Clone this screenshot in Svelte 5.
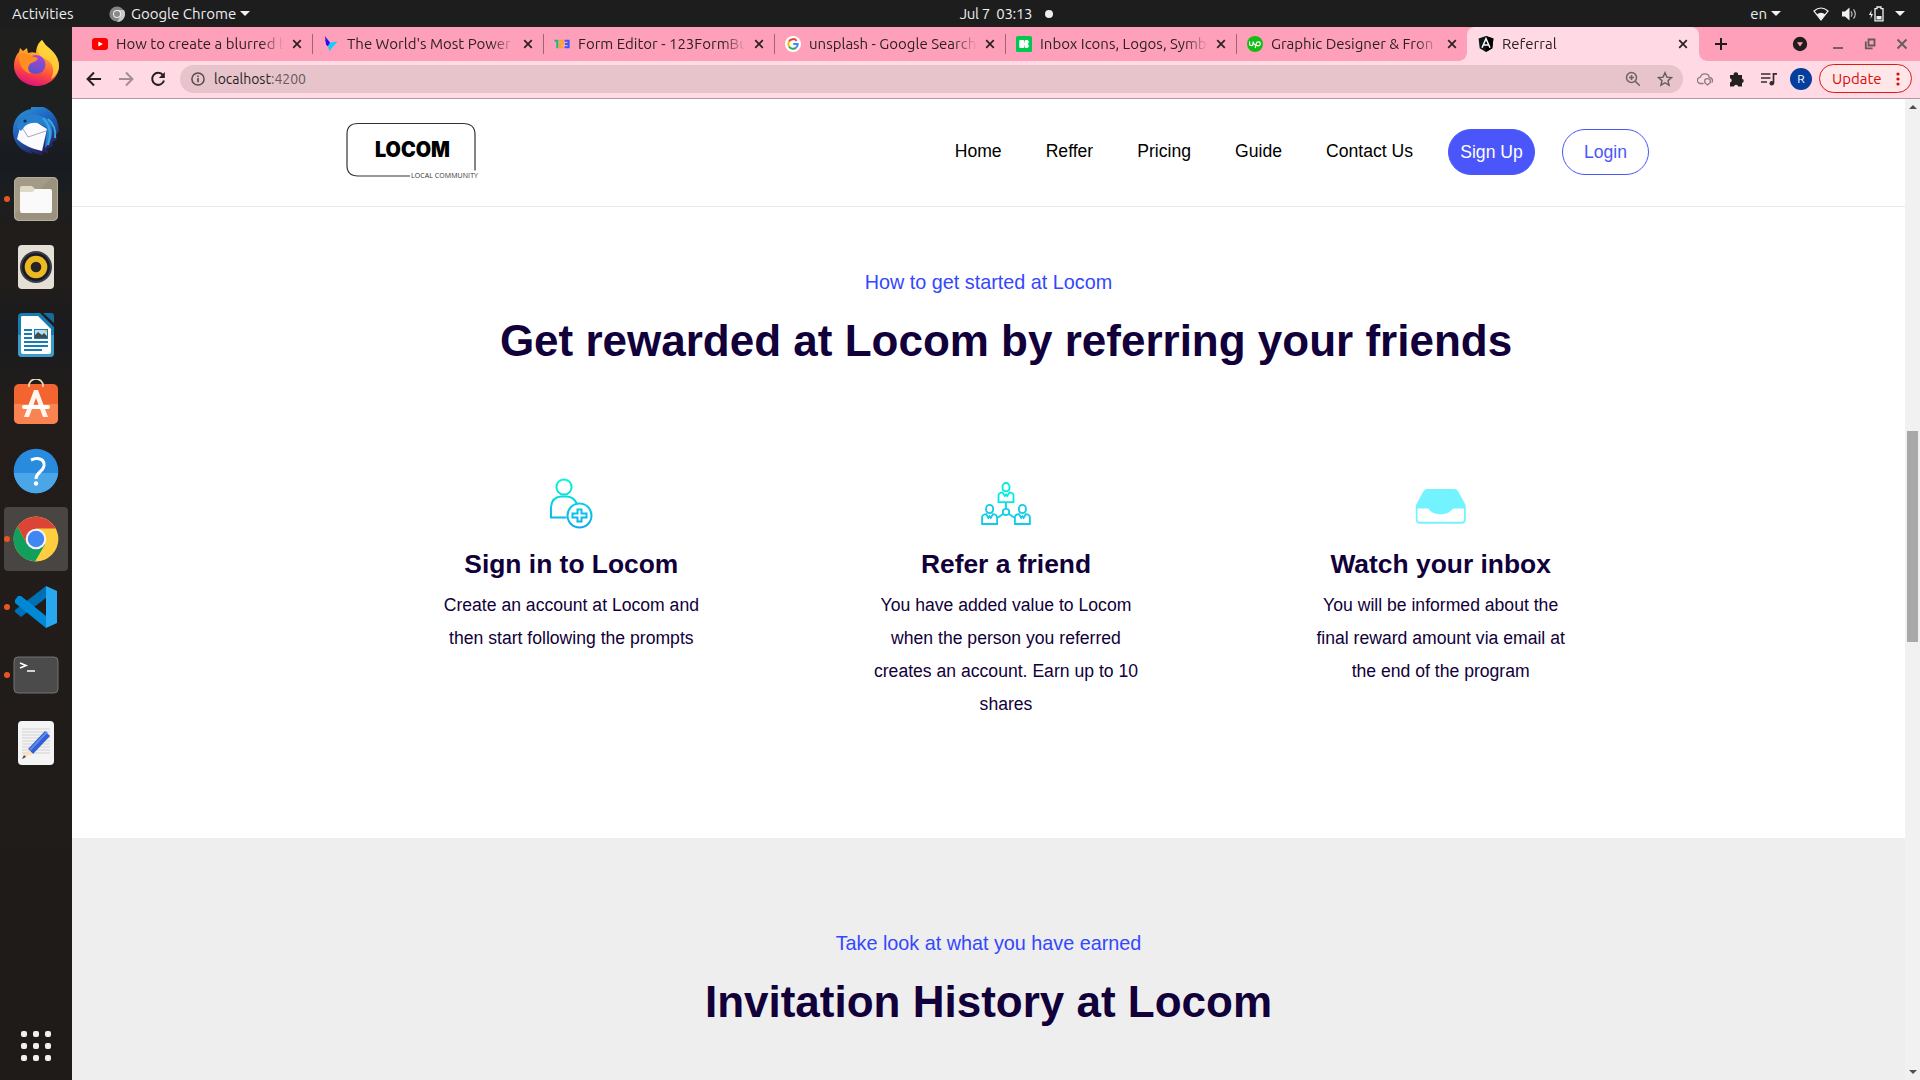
<script>
  const tabs = [
    { icon: 'youtube', title: 'How to create a blurred b' },
    { icon: 'bolt', title: "The World's Most Power" },
    { icon: 'form', title: 'Form Editor - 123FormBu' },
    { icon: 'google', title: 'unsplash - Google Search' },
    { icon: 'icons8', title: 'Inbox Icons, Logos, Symb' },
    { icon: 'upwork', title: 'Graphic Designer & Fron' },
    { icon: 'angular', title: 'Referral', active: true }
  ];
  const dock = [
    { icon: 'firefox' },
    { icon: 'thunderbird' },
    { icon: 'files', running: true },
    { icon: 'music' },
    { icon: 'writer' },
    { icon: 'software' },
    { icon: 'help' },
    { icon: 'chrome', running: true, active: true },
    { icon: 'vscode', running: true },
    { icon: 'terminal', running: true },
    { icon: 'editor' }
  ];
  const nav = ['Home', 'Reffer', 'Pricing', 'Guide', 'Contact Us'];
  const steps = [
    { icon: 'signin', title: 'Sign in to Locom', text: 'Create an account at Locom and then start following the prompts' },
    { icon: 'refer', title: 'Refer a friend', text: 'You have added value to Locom when the person you referred creates an account. Earn up to 10 shares' },
    { icon: 'inbox', title: 'Watch your inbox', text: 'You will be informed about the final reward amount via email at the end of the program' }
  ];
</script>

{#snippet favicon(name)}
  <svg class="favicon" viewBox="0 0 16 16" width="16" height="16">
    {#if name === 'youtube'}
      <rect x="0" y="2" width="16" height="12" rx="3" fill="#f00" />
      <path d="M6.4 5.4v5.2L10.9 8z" fill="#fff" />
    {:else if name === 'bolt'}
      <path d="M2 .3l5 6.200L4.600 9.700 3 8.800z" fill="#3a00ff" />
      <path d="M4.600 7L14.400 5.600 6.200 15.300z" fill="#12cdff" />
      <path d="M2.200 4l4.800 2.500-2.300 4z" fill="#2a10e0" />
    {:else if name === 'form'}
      <path d="M.5 4.800h2.800v7.400" fill="none" stroke="#12b886" stroke-width="2" />
      <path d="M5.200 4.800h3.600v3H6v3.400h3.600" fill="none" stroke="#ffa51c" stroke-width="2" />
      <path d="M10.600 4.800h4v6.500h-4M11 8h3.500" fill="none" stroke="#2d5bff" stroke-width="2" />
    {:else if name === 'google'}
      <circle cx="8" cy="8" r="8" fill="#fff" />
      <path d="M11.700 4.800A4.700 4.700 0 0 0 4 5.500" fill="none" stroke="#ea4335" stroke-width="2" />
      <path d="M4 5.500a4.800 4.800 0 0 0 0 5" fill="none" stroke="#fbbc05" stroke-width="2" />
      <path d="M4 10.500a4.700 4.700 0 0 0 7.200 1" fill="none" stroke="#34a853" stroke-width="2" />
      <path d="M11.200 11.500A4.800 4.800 0 0 0 12.700 8H8.200" fill="none" stroke="#4285f4" stroke-width="2" />
    {:else if name === 'icons8'}
      <rect width="16" height="16" rx="1.5" fill="#00c853" />
      <path d="M4.200 4h3q.9 0 .9.900v6.200q0 .900-.9.900h-3q-.9 0-.9-.900V4.900q0-.9.900-.9zM9.400 4h2q1.400.3 1.400 2 0 1.500-1 2 1 .5 1 2 0 1.700-1.400 2h-2q-1-.3-1-2 0-1.500.2-2-.2-.5-.2-2 0-1.700 1-2z" fill="#fff" />
      <path d="M7 8h3" stroke="#fff" stroke-width="1.800" />
    {:else if name === 'upwork'}
      <circle cx="8" cy="8" r="8" fill="#14bd14" />
      <path d="M2.600 5.600v2.300a1.700 1.700 0 0 0 3.400 0V5.600c.6 1.600 1.400 2.900 2.600 3.800M8.200 12L9.300 7.600a2 2 0 1 1 1.900 2.300c-1 0-1.800-.5-2.500-1.200" fill="none" stroke="#fff" stroke-width="1.200" />
    {:else}
      <path d="M8 0l7.400 2.600-1.100 9.700L8 16l-6.300-3.700L.6 2.600z" fill="#10161c" />
      <path d="M8 0v16l6.300-3.700 1.100-9.700z" fill="#000" />
      <path d="M4 11.800L8 2.700l4 9.100M5.600 9.100h4.800" fill="none" stroke="#fff" stroke-width="1.500" />
    {/if}
  </svg>
{/snippet}

{#snippet dockIcon(name)}
  <svg viewBox="0 0 48 48" width="48" height="48">
    {#if name === 'firefox'}
      <path d="M30 1c2 3 4 6 7 8 6 5 10 11 10 18 0 11-10 20-22 20S2 38 2 27c0-6 2-11 5-14l1-4 3 3 4-3 1 5c3-1 6-1 8 0 0-5 2-10 6-13z" fill="url(#fox)" />
      <path d="M30 1c2 3 4 6 7 8 6 5 10 11 10 18 0 6-4 11-8 13 3-6 3-12-1-17-4-4-10-4-12-10 0-5 1-9 4-12z" fill="#ffd73b" opacity=".82" />
      <circle cx="24" cy="25.500" r="9.500" fill="url(#orb)" />
      <path d="M7 17c4-3 9-2 12 0l7 2c-1 4-6 4-8 6-3 3-2 7 1 10-8-2-12-9-12-18z" fill="#ff8e20" />
    {:else if name === 'thunderbird'}
      <path d="M19 2C7 4 0 14 1 26c1 11 9 19 20 21l-3-4c3 3 8 5 13 5l-1-3 6 1-1-4 6-3-1-3 5-4-1-4 3-4-1-6c-1-9-9-18-19-19-4 0-8 1-8-1z" fill="url(#bird)" />
      <path d="M9 17l15-2 11 7-5 22c-10-2-20-7-25-12z" fill="#fbfbff" />
      <path d="M8 17l8 13 18-6" fill="none" stroke="#aaa9b3" stroke-width="1" />
      <path d="M5 20c2-9 9-12 18-13l13 5c7 9 5 22-3 29l2-20c-7-6-15-7-22-2l-4 5z" fill="#2780cf" />
      <path d="M36 12c6 5 8 12 7 19M31 11c8 8 8 18 5 27" stroke="#3aa7df" fill="none" stroke-width="2" />
      <circle cx="13" cy="14" r="1.600" fill="#172846" />
    {:else if name === 'files'}
      <rect x="2" y="2" width="44" height="44" rx="5" fill="#a39b86" /><path d="M40 2h1a5 5 0 0 1 5 5v34a5 5 0 0 1-5 5H7a5 5 0 0 1-5-5v-1z" fill="#9a927e" />
      <path d="M8 20v-7q0-2 2-2h10l4 4h12v5z" fill="#dedac8" />
      <path d="M8 17h12q2 0 3-3h15q2 0 2 2v20q0 2-2 2H10q-2 0-2-2z" fill="#fafafa" />
      <rect x="2.500" y="2.500" width="43" height="43" rx="5" fill="none" stroke="#b6ae9a" />
    {:else if name === 'music'}
      <rect x="6" y="2" width="36" height="44" rx="4" fill="#e4e0d5" />
      <circle cx="24" cy="24" r="16" fill="#3a3e48" /><circle cx="24" cy="24" r="14" fill="#1a1c25" />
      <circle cx="24" cy="24" r="11.300" fill="#ecba20" /><circle cx="24" cy="24" r="5.300" fill="#252525" />
    {:else if name === 'writer'}
      <path d="M10 2h18l14 14v26q0 4-4 4H10q-4 0-4-4V6q0-4 4-4z" fill="#177cb1" />
      <path d="M6 24h36v18q0 4-4 4H10q-4 0-4-4z" fill="#3e9ccc" />
      <path d="M10 5h16l13 13v23q0 2-2 2H11q-2 0-2-2V6z" fill="#fff" />
      <path d="M31 2h8q3 0 3 3v7z" fill="#176b99" />
      <path d="M12 19h8M12 23h8M12 27h8M12 31h24M12 35h24M12 39h18" stroke="#177cb1" stroke-width="2" />
      <rect x="22" y="18" width="14" height="10" fill="#177cb1" /><path d="M23 19h12v8H23z" fill="#b6dff5" /><path d="M23 27v-3l3-3 4 3 2-2 3 3v2z" fill="#424b51" /><path d="M32 19h3v3z" fill="#f5c21d" />
    {:else if name === 'software'}
      <rect x="2" y="5" width="44" height="40" rx="5" fill="#f26530" /><path d="M2 25h44v15a5 5 0 0 1-5 5H7a5 5 0 0 1-5-5z" fill="#f98351" />
      <path d="M17 8V6.500a7 6.500 0 0 1 14 0V8" fill="none" stroke="#f5dab6" stroke-width="1.700" />
      <path d="M22 11h4l10 27h-5l-7-19-7 19h-5z" fill="#fff4ee" /><rect x="10" y="26" width="28" height="4" rx="2" fill="#fff" />
    {:else if name === 'help'}
      <circle cx="24" cy="24" r="22.300" fill="#298bdd" /><path d="M1.800 26h44.400a22.300 22.300 0 0 1-44.400 0z" fill="#4aa6e7" />
      <path d="M19 13c7-3 14-1 13 6-1 6-8 6-8 13" fill="none" stroke="#fff" stroke-width="3" /><circle cx="24" cy="36.500" r="2.200" fill="#fff" />
    {:else if name === 'chrome'}
      <circle cx="24" cy="24" r="22.400" fill="#ffcd40" />
      <path d="M24 24L5.500 11.500A22.400 22.400 0 0 1 43.600 13.500H24z" fill="#dc4437" />
      <path d="M5.500 11.500A22.400 22.400 0 0 0 23 46.400l10-17L24 24l-9 5z" fill="#10a05c" />
      <path d="M5.500 11.500L15 29l9-15z" fill="#dc4437" />
      <circle cx="24" cy="24" r="10.300" fill="#f4f4f4" /><circle cx="24" cy="24" r="8.200" fill="#4285f4" />
    {:else if name === 'vscode'}
      <path d="M34 3v12L9 34l-6-5v-2z" fill="#0070b4" />
      <path d="M9 13l25 20v12L3 20v-3l3-4z" fill="#0089d6" />
      <path d="M34 3l11 5v32l-11 5z" fill="#28a8f1" />
    {:else if name === 'terminal'}
      <rect x="2" y="6" width="44" height="36" rx="4" fill="#4b4b4b" stroke="#747474" />
      <path d="M8 12l6 2.500L8 17M15 20h8" stroke="#fff" fill="none" stroke-width="1.600" />
    {:else}
      <rect x="6" y="2" width="36" height="44" rx="4" fill="#f4f4f4" />
      <path d="M10 10h28M10 13h28M10 16h28M10 19h28M10 22h28M10 25h28M10 28h28M10 31h28M10 34h28" stroke="#d1d1d1" />
      <path d="M16 30L33 12l5 5-17 18z" fill="#3060d6" /><path d="M18 31L35 13" stroke="#6189ea" stroke-width="2" /><path d="M16 30l5 5-10 4z" fill="#ffe0bc" /><path d="M12 36l2 2-4 2z" fill="#444" />
    {/if}
  </svg>
{/snippet}

{#snippet person(x, y, color)}
  <g transform={`translate(${x} ${y})`} stroke={color}>
    <rect x="-3.500" y="0" width="7" height="8.400" rx="3.500" />
    <path d="M-7.500 19.200v-6.800q0-2.400 4-3.100L-1.200 13l1.200-1.600L1.200 13l2.300-3.700q4 .7 4 3.100v6.800z" />
  </g>
{/snippet}

{#snippet stepIcon(name)}
  <svg class="step-icon" viewBox="0 0 60 60" width="60" height="60">
    {#if name === 'signin'}
      <g fill="none" stroke="url(#cyan)" stroke-width="2">
        <circle cx="23" cy="12" r="7.600" />
        <path d="M25.600 42.500H10V32q1-10 10-10.500h6q7 .5 10 7.300" />
        <circle cx="38.500" cy="40.500" r="12" />
        <path d="M36.500 34.500h4v4h5v4h-5v4h-4v-4h-5v-4h5z" />
      </g>
    {:else if name === 'refer'}
      <g fill="none" stroke="#0cd2e8" stroke-width="1.800">
        {@render person(30, 8, '#00ecde')}
        {@render person(13.6, 29.8, '#10cbea')}
        {@render person(46.4, 29.8, '#10cbea')}
        <circle cx="30" cy="37" r="3.200" />
        <path d="M30 27.500v6.200M27 39l-5 3.400M33 39l5 3.400" />
      </g>
    {:else}
      <path d="M16.300 14h27q2.600 0 4 2.400l6.500 12.200q1 1.800 1 3.600v12q0 4.500-4.500 4.500h-41q-4.500 0-4.500-4.500v-12q0-1.800 1-3.600l6.500-12.200q1.400-2.400 4-2.400z" fill="#73f3ff" />
      <path d="M6.500 33.500h9.800q1 0 2 1.300 4 4.600 11.300 4.600t11.300-4.600q1-1.300 2-1.300h10v10.800q0 2.500-2.500 2.500H9q-2.500 0-2.500-2.500z" fill="#fff" />
    {/if}
  </svg>
{/snippet}

<svg class="defs" width="0" height="0">
  <defs>
    <linearGradient id="fox" x1=".7" y1="0" x2=".4" y2="1"><stop offset="0" stop-color="#fff044" /><stop offset=".35" stop-color="#ffa425" /><stop offset=".7" stop-color="#ff4b3e" /><stop offset="1" stop-color="#e0127c" /></linearGradient>
    <linearGradient id="orb" x1=".6" y1="0" x2=".3" y2="1"><stop offset="0" stop-color="#a645dc" /><stop offset="1" stop-color="#5653c4" /></linearGradient>
    <linearGradient id="bird" x1="0" y1="0" x2=".5" y2="1"><stop offset="0" stop-color="#339ed5" /><stop offset=".5" stop-color="#1d62c0" /><stop offset="1" stop-color="#26235e" /></linearGradient>
    <linearGradient id="cyan" gradientUnits="userSpaceOnUse" x1="0" y1="4" x2="0" y2="53"><stop offset="0" stop-color="#00f8d8" /><stop offset="1" stop-color="#0baaf2" /></linearGradient>
  </defs>
</svg>

<div class="desktop">
  <div class="topbar">
    <div class="side left">
      <span class="activities">Activities</span>
      <svg width="16" height="16" viewBox="0 0 16 16"><circle cx="8" cy="8" r="7.600" fill="#858585" /><path d="M8 4h7a8 8 0 0 1-7 12l3-5z" fill="#c9c9c9" /><circle cx="8" cy="8" r="4" fill="#eee" /><circle cx="8" cy="8" r="3" fill="#888" /></svg>
      <span class="appname">Google Chrome</span>
      <i class="caret"></i>
    </div>
    <div class="clock"><span>Jul 7&nbsp; 03:13</span><i></i></div>
    <div class="side right">
      <span class="lang">en</span><i class="caret"></i>
      <svg class="wifi" width="16" height="16" viewBox="0 0 16 16"><path d="M1 5q7-6 14 0L8 14z" fill="none" stroke="#f1f1f1" stroke-width="1.200" /><path d="M3.800 8.300q4.200-3 8.400 0L8 14z" fill="#f1f1f1" /></svg>
      <svg class="sound" width="16" height="16" viewBox="0 0 16 16"><path d="M1 5.500h3L8.500 1.500v13L4 10.500H1z" fill="#f1f1f1" /><path d="M10 5.300q2 2.700 0 5.400M12.500 3.300q3.500 4.700 0 9.400" fill="none" stroke="#bbb" stroke-width="1.200" /></svg>
      <svg class="battery" width="16" height="16" viewBox="0 0 16 16"><path d="M7 2.600h2V1h4v1.600h2v12.300H7z" fill="none" stroke="#f1f1f1" stroke-width="1.300" /><path d="M8.500 10h5v3.500h-5zM3.500 4L1 9h2l-.5 4L5 8H3.200z" fill="#f1f1f1" /></svg>
      <i class="caret last"></i>
    </div>
  </div>

  <div class="workspace">
    <aside class="dock">
      {#each dock as item}
        <div class="dock-item">
          <div class="tile" class:active={item.active}>{@render dockIcon(item.icon)}</div>
          {#if item.running}<i class="running"></i>{/if}
        </div>
      {/each}
      <div class="apps">
        {#each Array(9) as _}<i></i>{/each}
      </div>
    </aside>

    <div class="browser">
      <div class="tabstrip">
        {#each tabs as tab}
          <div class="tab" class:active={tab.active}>
            {@render favicon(tab.icon)}
            <span class="tab-title">{tab.title}</span>
            <svg class="close" width="10" height="10" viewBox="0 0 10 10"><path d="M1.200 1.200l7.600 7.600M8.800 1.200L1.200 8.800" stroke="#2a2023" stroke-width="1.700" /></svg>
          </div>
        {/each}
        <svg class="new" width="14" height="14" viewBox="0 0 14 14"><path d="M7 1v12M1 7h12" stroke="#1f1a1c" stroke-width="2" /></svg>
        <div class="window-controls">
          <svg class="dropdown" width="16" height="16" viewBox="0 0 16 16"><circle cx="8" cy="8" r="7.200" fill="#221c1e" /><path d="M5 6.300h6L8 10.400z" fill="#ffa0ba" /></svg>
          <svg width="16" height="16" viewBox="0 0 16 16"><path d="M3 12h10" stroke="#625a5d" stroke-width="1.800" /></svg>
          <svg width="16" height="16" viewBox="0 0 16 16"><path d="M6.500 3.500h6v6h-6zM3.800 5.500v6.800h6.800" fill="none" stroke="#625a5d" stroke-width="1.800" /></svg>
          <svg width="16" height="16" viewBox="0 0 16 16"><path d="M3.500 3.500l9 9M12.500 3.500l-9 9" stroke="#625a5d" stroke-width="1.800" /></svg>
        </div>
      </div>

      <div class="toolbar">
        <svg width="16" height="16" viewBox="0 0 16 16"><path d="M15 8H2M8 1.500L1.600 8 8 14.500" fill="none" stroke="#241f21" stroke-width="2" /></svg>
        <svg width="16" height="16" viewBox="0 0 16 16"><path d="M1 8h13M8 1.500L14.400 8 8 14.500" fill="none" stroke="#a48e94" stroke-width="2" /></svg>
        <svg width="16" height="16" viewBox="0 0 16 16"><path d="M13 4.200A6 6 0 1 0 14 9.500" fill="none" stroke="#241f21" stroke-width="2" /><path d="M14.800 1v6H8.800z" fill="#241f21" /></svg>
        <div class="omnibox">
          <svg width="14" height="14" viewBox="0 0 14 14"><circle cx="7" cy="7" r="6.100" fill="none" stroke="#554b4e" stroke-width="1.500" /><path d="M7 6v4.200M7 3.400v1.500" stroke="#554b4e" stroke-width="1.600" /></svg>
          <span class="url"><b>localhost</b>:4200</span>
          <svg class="zoom" width="16" height="16" viewBox="0 0 16 16"><path d="M10 10l4.800 4.800M6.500 4v5M4 6.500h5" stroke="#706367" stroke-width="1.600" /><circle cx="6.500" cy="6.500" r="5" fill="none" stroke="#706367" stroke-width="1.500" /></svg>
          <svg width="16" height="16" viewBox="0 0 16 16"><path d="M8 1.800l1.900 4.300 4.700.4-3.600 3.100 1.100 4.600L8 11.700l-4.100 2.500L5 9.600 1.400 6.500l4.700-.4z" fill="none" stroke="#655a5e" stroke-width="1.400" /></svg>
        </div>
        <div class="extensions">
          <svg width="16" height="16" viewBox="0 0 16 16"><path d="M6.500 12.500H3.800a3.200 3.200 0 0 1-.4-6.400C4.500 1.500 11.500 1.800 12.300 6.300q3.200.4 3.200 3.200 0 1.200-.8 2" fill="none" stroke="#887a7f" stroke-width="1.300" /><path d="M7.800 8.800Q10.500 6.500 13.200 8.800v3L10.500 14 7.800 11.800z" fill="none" stroke="#887a7f" stroke-width="1.300" /></svg>
          <svg width="16" height="16" viewBox="0 0 16 16"><path d="M1 4h3.700a2.200 2.200 0 1 1 4.300 0h4v3.700a2.200 2.200 0 0 1 0 4.300v3.500H9.200a2.200 2.200 0 0 0-4.300 0H1v-4a2.200 2.200 0 0 0 0-4.300z" fill="#241f21" /></svg>
          <svg width="16" height="16" viewBox="0 0 16 16"><path d="M0 3h9.500M0 7h9.500M0 11h6M12.500 12V2.800H16" fill="none" stroke="#342c2f" stroke-width="1.700" /><circle cx="10.800" cy="12.300" r="2.300" fill="#342c2f" /></svg>
        </div>
        <span class="avatar">R</span>
        <div class="update"><span>Update</span><svg width="4" height="14" viewBox="0 0 4 14"><circle cx="2" cy="2" r="1.600" fill="#d80b0b" /><circle cx="2" cy="7" r="1.600" fill="#d80b0b" /><circle cx="2" cy="12" r="1.600" fill="#d80b0b" /></svg></div>
      </div>

      <div class="viewport">
        <main>
          <header>
            <svg class="logo" width="136" height="60" viewBox="0 0 136 60">
              <path d="M66 56H14Q3 56 3 45.500V14Q3 3.500 14 3.500h105q12 0 12 11v36" fill="none" stroke="#333" stroke-width="1.200" />
              <text class="brand" x="31" y="37" textLength="75" lengthAdjust="spacingAndGlyphs">LOCOM</text>
              <text class="tagline" x="67" y="57.500" textLength="67" lengthAdjust="spacing">LOCAL COMMUNITY</text>
            </svg>
            <nav>
              {#each nav as link}<a href="#top">{link}</a>{/each}
            </nav>
            <button class="signup">Sign Up</button>
            <button class="login">Login</button>
          </header>

          <section class="intro">
            <p class="eyebrow">How to get started at Locom</p>
            <h2>Get rewarded at Locom by referring your friends</h2>
            <div class="steps">
              {#each steps as step}
                <article>
                  {@render stepIcon(step.icon)}
                  <h3>{step.title}</h3>
                  <p>{step.text}</p>
                </article>
              {/each}
            </div>
          </section>

          <section class="history">
            <p class="eyebrow">Take look at what you have earned</p>
            <h2>Invitation History at Locom</h2>
          </section>
        </main>
        <div class="scrollbar">
          <i class="arrow up"></i>
          <div class="track"><div class="thumb"></div></div>
          <i class="arrow down"></i>
        </div>
      </div>
    </div>
  </div>
</div>

<style>
  :global(body) { margin: 0; overflow: hidden; }
  * { box-sizing: border-box; }
  svg { display: block; flex: none; }
  .defs { position: absolute; }
  p, h2, h3 { margin: 0; }
  .desktop { width: 1920px; height: 1080px; display: flex; flex-direction: column; overflow: hidden; font-family: Ubuntu, "Noto Sans", sans-serif; }

  .topbar { height: 27px; flex: none; display: grid; grid-template-columns: 1fr auto 1fr; align-items: center; background: #1d1d1d; color: #eee; font-size: 15px; line-height: 26px; }
  .side { display: flex; align-items: center; }
  .left { padding-left: 12px; }
  .activities { width: 97px; }
  .appname { width: 104px; margin-left: 6px; white-space: nowrap; }
  .caret { border: 5px solid transparent; border-top-color: #f1f1f1; border-bottom: 0; }
  .left .caret { margin-left: 5px; }
  .clock { display: flex; align-items: center; gap: 13px; padding-left: 93px; letter-spacing: -0.3px; }
  .clock i { width: 8px; height: 8px; border-radius: 50%; background: #eee; }
  .right { justify-content: flex-end; padding-right: 15px; }
  .lang { margin-right: 4px; }
  .wifi { margin-left: 32px; }
  .sound { margin-left: 12px; }
  .battery { margin-left: 11px; }
  .last { margin-left: 11px; }

  .workspace { flex: 1; display: flex; min-height: 0; }
  .dock { width: 72px; flex: none; display: flex; flex-direction: column; padding: 2px 0 19px; background: linear-gradient(#1f1f1d 0, #1e1f20 9%, #171b20 13%, #1c1e20 16%, #211d1a 20%, #211d1a 24%, #1a1b1f 29%, #221d1a 36%, #1f1b18 100%); }
  .dock-item { height: 68px; flex: none; position: relative; display: grid; place-items: center; }
  .tile { width: 64px; height: 64px; display: grid; place-items: center; border-radius: 4px; }
  .tile.active { background: #484542; }
  .running { position: absolute; left: 4px; top: 31px; width: 6px; height: 6px; border-radius: 50%; background: #e95420; }
  .apps { margin: auto auto 0; display: grid; grid-template-columns: repeat(3, 6px); gap: 6px; }
  .apps i { height: 6px; border-radius: 2px; background: #f1f0ef; }

  .browser { flex: 1; min-width: 0; display: flex; flex-direction: column; }
  .tabstrip { height: 34px; flex: none; display: flex; align-items: center; padding-left: 9px; background: #ffa0ba; color: #2b2124; }
  .tab { width: 231px; height: 34px; flex: none; display: flex; align-items: center; padding: 0 10px 0 11px; position: relative; }
  .tab:not(.active)::after { content: ""; position: absolute; right: -1px; top: 7px; width: 1px; height: 20px; background: #9c6674; }
  .tab:nth-child(6)::after { display: none; }
  .tab-title { width: 168px; margin-left: 8px; overflow: hidden; white-space: nowrap; font-size: 15px; line-height: 20px; mask-image: linear-gradient(90deg, #000 86%, transparent 100%); }
  .close { margin-left: 8px; }
  .tab.active { background: #ffd9e4; border-radius: 8px 8px 0 0; width: 232px; }
  .tab.active::before, .tab.active::after { content: ""; position: absolute; bottom: 0; width: 8px; height: 8px; background: radial-gradient(circle at 0 0, transparent 7.500px, #ffd9e4 8px); }
  .tab.active::before { left: -8px; }
  .tab.active::after { right: -8px; transform: scaleX(-1); }
  .new { margin-left: 15px; }
  .window-controls { display: flex; gap: 16px; margin-left: auto; padding-right: 10px; }
  .dropdown { margin-right: 6px; }

  .toolbar { height: 38px; flex: none; display: flex; align-items: center; padding: 0 8px 2px 14px; background: #ffd9e4; border-bottom: 1px solid #b899a3; }
  .toolbar > svg { margin-right: 16px; }
  .omnibox { width: 1503px; height: 28px; margin-left: -2px; flex: none; display: flex; align-items: center; padding: 0 10px 0 11px; border-radius: 14px; background: #e7c4cb; }
  .url { margin-left: 9px; font-size: 14px; color: #665a5d; }
  .url b { font-weight: 400; color: #271f21; }
  .zoom { margin-left: auto; margin-right: 16px; }
  .extensions { display: flex; gap: 16px; margin-left: 14px; }
  .avatar { width: 22px; height: 22px; margin-left: 13px; border-radius: 50%; background: #043f9e; color: #fff; font-size: 12px; line-height: 22px; text-align: center; }
  .update { width: 93px; height: 29px; margin-left: auto; display: flex; align-items: center; justify-content: space-between; padding: 0 11px 0 12px; border: 1px solid #df1717; border-radius: 15px; background: #ffe6e8; color: #d80b0b; font-size: 15px; }

  .viewport { flex: 1; min-height: 0; display: flex; font-family: "Liberation Sans", Arial, sans-serif; }
  main { flex: 1; min-width: 0; background: #fff; display: flex; flex-direction: column; }
  header { height: 108px; flex: none; display: flex; align-items: center; padding: 0 256px 0 272px; border-bottom: 1px solid #e9e9e9; }
  .logo { margin-bottom: 6px; }
  .brand { font: 900 21px Inter, "Liberation Sans", sans-serif; fill: #000; }
  .tagline { font: 7px "Open Sans", sans-serif; fill: #333; }
  nav { display: flex; gap: 44px; margin-left: auto; }
  nav a { color: #000; text-decoration: none; font-size: 17.600px; line-height: 24px; margin-bottom: 4px; }
  button { width: 87px; height: 46px; margin-bottom: 2px; padding: 2px 0 0; border: 1px solid #4a56fa; border-radius: 23px; font: 17.600px "Liberation Sans", sans-serif; }
  .signup { margin-left: 35px; background: #4a56fa; color: #fff; }
  .login { margin-left: 27px; background: #fff; color: #4a56fa; }

  section { text-align: center; color: #11003a; }
  .intro { height: 631px; flex: none; padding-top: 60px; }
  .eyebrow { font-size: 19.800px; line-height: 30px; color: #3347ff; }
  h2 { margin-top: 18px; font-size: 44px; line-height: 52px; }
  .intro h2 { padding-left: 35px; }
  .steps { width: 1304px; margin: 108px 0 0 282px; display: grid; grid-template-columns: repeat(3, 1fr); }
  article { display: flex; flex-direction: column; align-items: center; }
  h3 { margin-top: 13px; font-size: 26.400px; line-height: 32px; }
  article p { width: 268px; margin-top: 9px; font-size: 17.600px; line-height: 33px; }
  .history { flex: 1; padding-top: 90px; background: #eee; }

  .scrollbar { width: 15px; flex: none; display: flex; flex-direction: column; align-items: center; justify-content: space-between; padding: 6px 0; background: #f1f1f1; }
  .arrow { border: 4px solid transparent; }
  .up { border-top: 0; border-bottom: 4px solid #505050; }
  .down { border-bottom: 0; border-top: 4px solid #505050; }
  .track { flex: 1; width: 11px; padding-top: 322px; }
  .thumb { height: 211px; background: #a8a8a8; }
</style>
